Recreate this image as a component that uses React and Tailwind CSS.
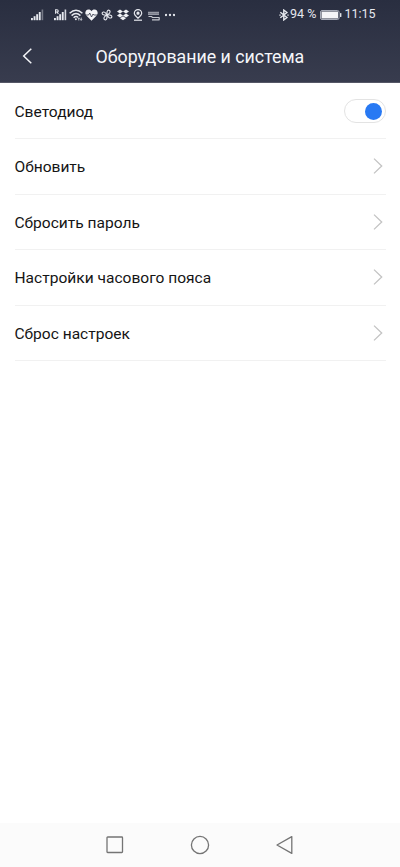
const rows = [
  "Обновить",
  "Сбросить пароль",
  "Настройки часового пояса",
  "Сброс настроек",
];

function Signal({ roaming = false }) {
  return (
    <svg className="h-3 w-[13px] shrink-0" viewBox="0 0 13 12" fill="#e6e8ee">
      <rect x="0" y="9" width="1.9" height="2.2" />
      <rect x="2.6" y="7.2" width="1.9" height="4" />
      <rect x="5.2" y="5.2" width="1.9" height="6" />
      <rect x="7.8" y="3" width="1.9" height="8.2" />
      <rect x="10.6" y="0.5" width="1.6" height="10.7" opacity={roaming ? 0.9 : 0.4} />
      {roaming && (
        <path d="M1.6 4.800V.8H3q1.200 0 1.200 1.100T3 3H1.800M3 3l1.400 1.800" fill="none" stroke="#e6e8ee" strokeWidth="1.100" />
      )}
    </svg>
  );
}

function Wifi() {
  return (
    <svg className="h-3 w-[14px] shrink-0" viewBox="0 0 14 12" fill="none" stroke="#e6e8ee" strokeWidth="1.500">
      <path d="M0.6 4.2Q7 -1.8 13.4 4.2M2.6 6.600Q7 2.500 11.4 6.600M4.6 8.800Q7 6.600 9 8.400" />
      <circle cx="6.9" cy="10.300" r="1" fill="#e6e8ee" stroke="none" />
      <path d="M9.800 11.500V8.8M9 9.800l.8-1 .8 1M12.200 8.6v2.700M11.400 10.300l.8 1 .8-1" strokeWidth="0.8" />
    </svg>
  );
}

function Heart() {
  return (
    <svg className="h-3 w-[13px] shrink-0" viewBox="0 0 13 12">
      <path d="M6.5 11.800L1.300 6.600C-.7 4.400.5.6 3.500.6c1.400 0 2.400.7 3 1.700.6-1 1.600-1.700 3-1.700 3 0 4.200 3.800 2.200 6z" fill="#f3f4f7" />
      <path d="M0 6h3.600l1.200-2 1.700 4 1.500-3 .8 1H13" fill="none" stroke="#2b3042" strokeWidth=".75" />
    </svg>
  );
}

function Pinwheel() {
  return (
    <svg className="h-3 w-3 shrink-0" viewBox="0 0 12 12" fill="none" stroke="#e6e8ee" strokeWidth="1.150">
      <path d="M6 6V3.400C6 1.800 7 .9 8.100 1.200S9.300 3 8.600 4C8 5 7 5.700 6 6z" />
      <path d="M6 6h2.600c1.600 0 2.500 1 2.200 2.100S9 9.300 8 8.600C7 8 6.300 7 6 6z" />
      <path d="M6 6v2.600c0 1.600-1 2.500-2.100 2.200S2.700 9 3.400 8C4 7 5 6.300 6 6z" />
      <path d="M6 6H3.400C1.800 6 .9 5 1.200 3.900S3 2.700 4 3.400C5 4 5.700 5 6 6z" />
    </svg>
  );
}

function Dropbox() {
  return (
    <svg className="h-3 w-3 shrink-0" viewBox="0 0 12 12" fill="#f0f2f6">
      <path d="M3 .6L6 2.600 3 4.600 0 2.600zM9 .6l3 2-3 2-3-2zM3 4.600l3 2-3 2-3-2zM9 4.600l3 2-3 2-3-2zM6 7.300l3 2-3 2-3-2z" />
    </svg>
  );
}

function Pin() {
  return (
    <svg className="h-3 w-[10px] shrink-0" viewBox="0 0 10 12" fill="none" stroke="#e6e8ee" strokeWidth="1.200">
      <path d="M5 9.200C2.500 7.100 1.300 5.700 1.300 4.300a3.700 3.700 0 0 1 7.400 0C8.700 5.700 7.500 7.100 5 9.200z" />
      <circle cx="5" cy="4.200" r="1" fill="#e6e8ee" />
      <path d="M1 11.200h8" />
    </svg>
  );
}

function Notice() {
  return (
    <svg className="h-3 w-3 shrink-0" viewBox="0 0 12 12" fill="none" stroke="#c5c8d0">
      <path d="M0 3.500h11M0 5.300h11" strokeWidth="1.500" opacity="0.7" />
      <path d="M.5 7.500h3l1 1h7M4 10.800h7.500M11.200 8.500v2.300" strokeWidth="1.200" />
    </svg>
  );
}

function StatusBar() {
  return (
    <div className="flex h-[29px] items-center pl-[31px] text-[12.500px] leading-none text-[#e6e8ee]">
      <Signal />
      <div className="ml-[10px]"><Signal roaming /></div>
      <div className="ml-[2px]"><Wifi /></div>
      <div className="ml-[2px]"><Heart /></div>
      <div className="ml-[3px]"><Pinwheel /></div>
      <div className="ml-[4px]"><Dropbox /></div>
      <div className="ml-[4px]"><Pin /></div>
      <div className="ml-[5px]"><Notice /></div>
      <svg className="ml-[5px] h-3 w-[10px] shrink-0" viewBox="0 0 10 12" fill="#e6e8ee">
        <circle cx="1" cy="6" r="1.150" /><circle cx="5" cy="6" r="1.150" /><circle cx="9" cy="6" r="1.150" />
      </svg>
      <svg className="ml-[104px] h-3 w-[10px] shrink-0" viewBox="0 0 9 12" preserveAspectRatio="none" fill="none" stroke="#e6e8ee" strokeWidth="1.250">
        <path d="M1.200 3.200l6 5.400L4.300 11V1l2.900 2.400-6 5.400" />
        <path d="M.3 6h1.200M7.500 6h1.200" />
      </svg>
      <span className="ml-px w-[29.500px] whitespace-nowrap">94 %</span>
      <svg className="h-3 w-[22px] shrink-0" viewBox="0 0 22 12">
        <rect x=".5" y="1.500" width="18.500" height="9" rx="1.500" fill="none" stroke="#a7abb7" />
        <rect x="1.500" y="2.500" width="16.500" height="7" fill="#f5f5f7" />
        <rect x="20" y="4" width="1.400" height="4" rx=".5" fill="#dfe1e6" />
      </svg>
      <span className="ml-[3px] whitespace-nowrap">11:15</span>
    </div>
  );
}

export default function App() {
  return (
    <div className="flex h-[867px] w-[400px] flex-col overflow-hidden bg-white font-['Roboto',sans-serif]">
      <header className="h-[83.400px] shrink-0 border-b border-[#555766] bg-linear-to-b from-[#292e40] to-[#383c4e]">
        <StatusBar />
        <div className="flex h-[54px] items-center">
          <svg className="ml-[22px] h-4 w-[11px]" viewBox="0 0 11 16" fill="none" stroke="#f4f5f8" strokeWidth="1.500">
            <path d="M9.300 .8L1.700 8l7.600 7.200" />
          </svg>
          <h1 className="ml-[62.500px] whitespace-nowrap pt-px text-[17.800px] leading-none text-[#f5f6fa]">Оборудование и система</h1>
        </div>
      </header>
      <main className="flex-1 pl-[14.500px] pr-[14px] text-[15.550px] text-[#151515]">
        <div className="flex h-[55.600px] items-center justify-between border-b border-[#f1f1f1]">
          <span className="pt-[3px]">Светодиод</span>
          <button role="switch" aria-checked="true" aria-label="Светодиод" className="mt-px flex h-6 w-[42px] items-center justify-end rounded-full border border-[#e3e3e3] bg-white pr-[3px]">
            <span className="size-[17px] rounded-full bg-[#2879f3]" />
          </button>
        </div>
        {rows.map((label) => (
          <div key={label} className="flex h-[55.600px] items-center justify-between border-b border-[#f1f1f1]">
            <span className="pt-[3px]">{label}</span>
            <svg className="mr-[3.500px] h-4 w-[10px]" viewBox="0 0 10 16" fill="none" stroke="#c3c3c3" strokeWidth="1.300">
              <path d="M1 .6L8.700 8 1 15.400" />
            </svg>
          </div>
        ))}
      </main>
      <nav className="flex h-11 shrink-0 items-center bg-[#fbfbfb] pl-[105px]">
        <svg className="size-5" viewBox="0 0 20 20" fill="none" stroke="#747474" strokeWidth="1.300"><rect x="2" y="2" width="15.500" height="15.500" rx=".7" /></svg>
        <svg className="ml-[65px] size-5" viewBox="0 0 20 20" fill="none" stroke="#747474" strokeWidth="1.300"><circle cx="10" cy="10" r="8.600" /></svg>
        <svg className="ml-[65px] size-5" viewBox="0 0 20 20" fill="none" stroke="#747474" strokeWidth="1.300" strokeLinejoin="round"><path d="M16.800 1.600v16.800L2 10z" /></svg>
      </nav>
    </div>
  );
}
